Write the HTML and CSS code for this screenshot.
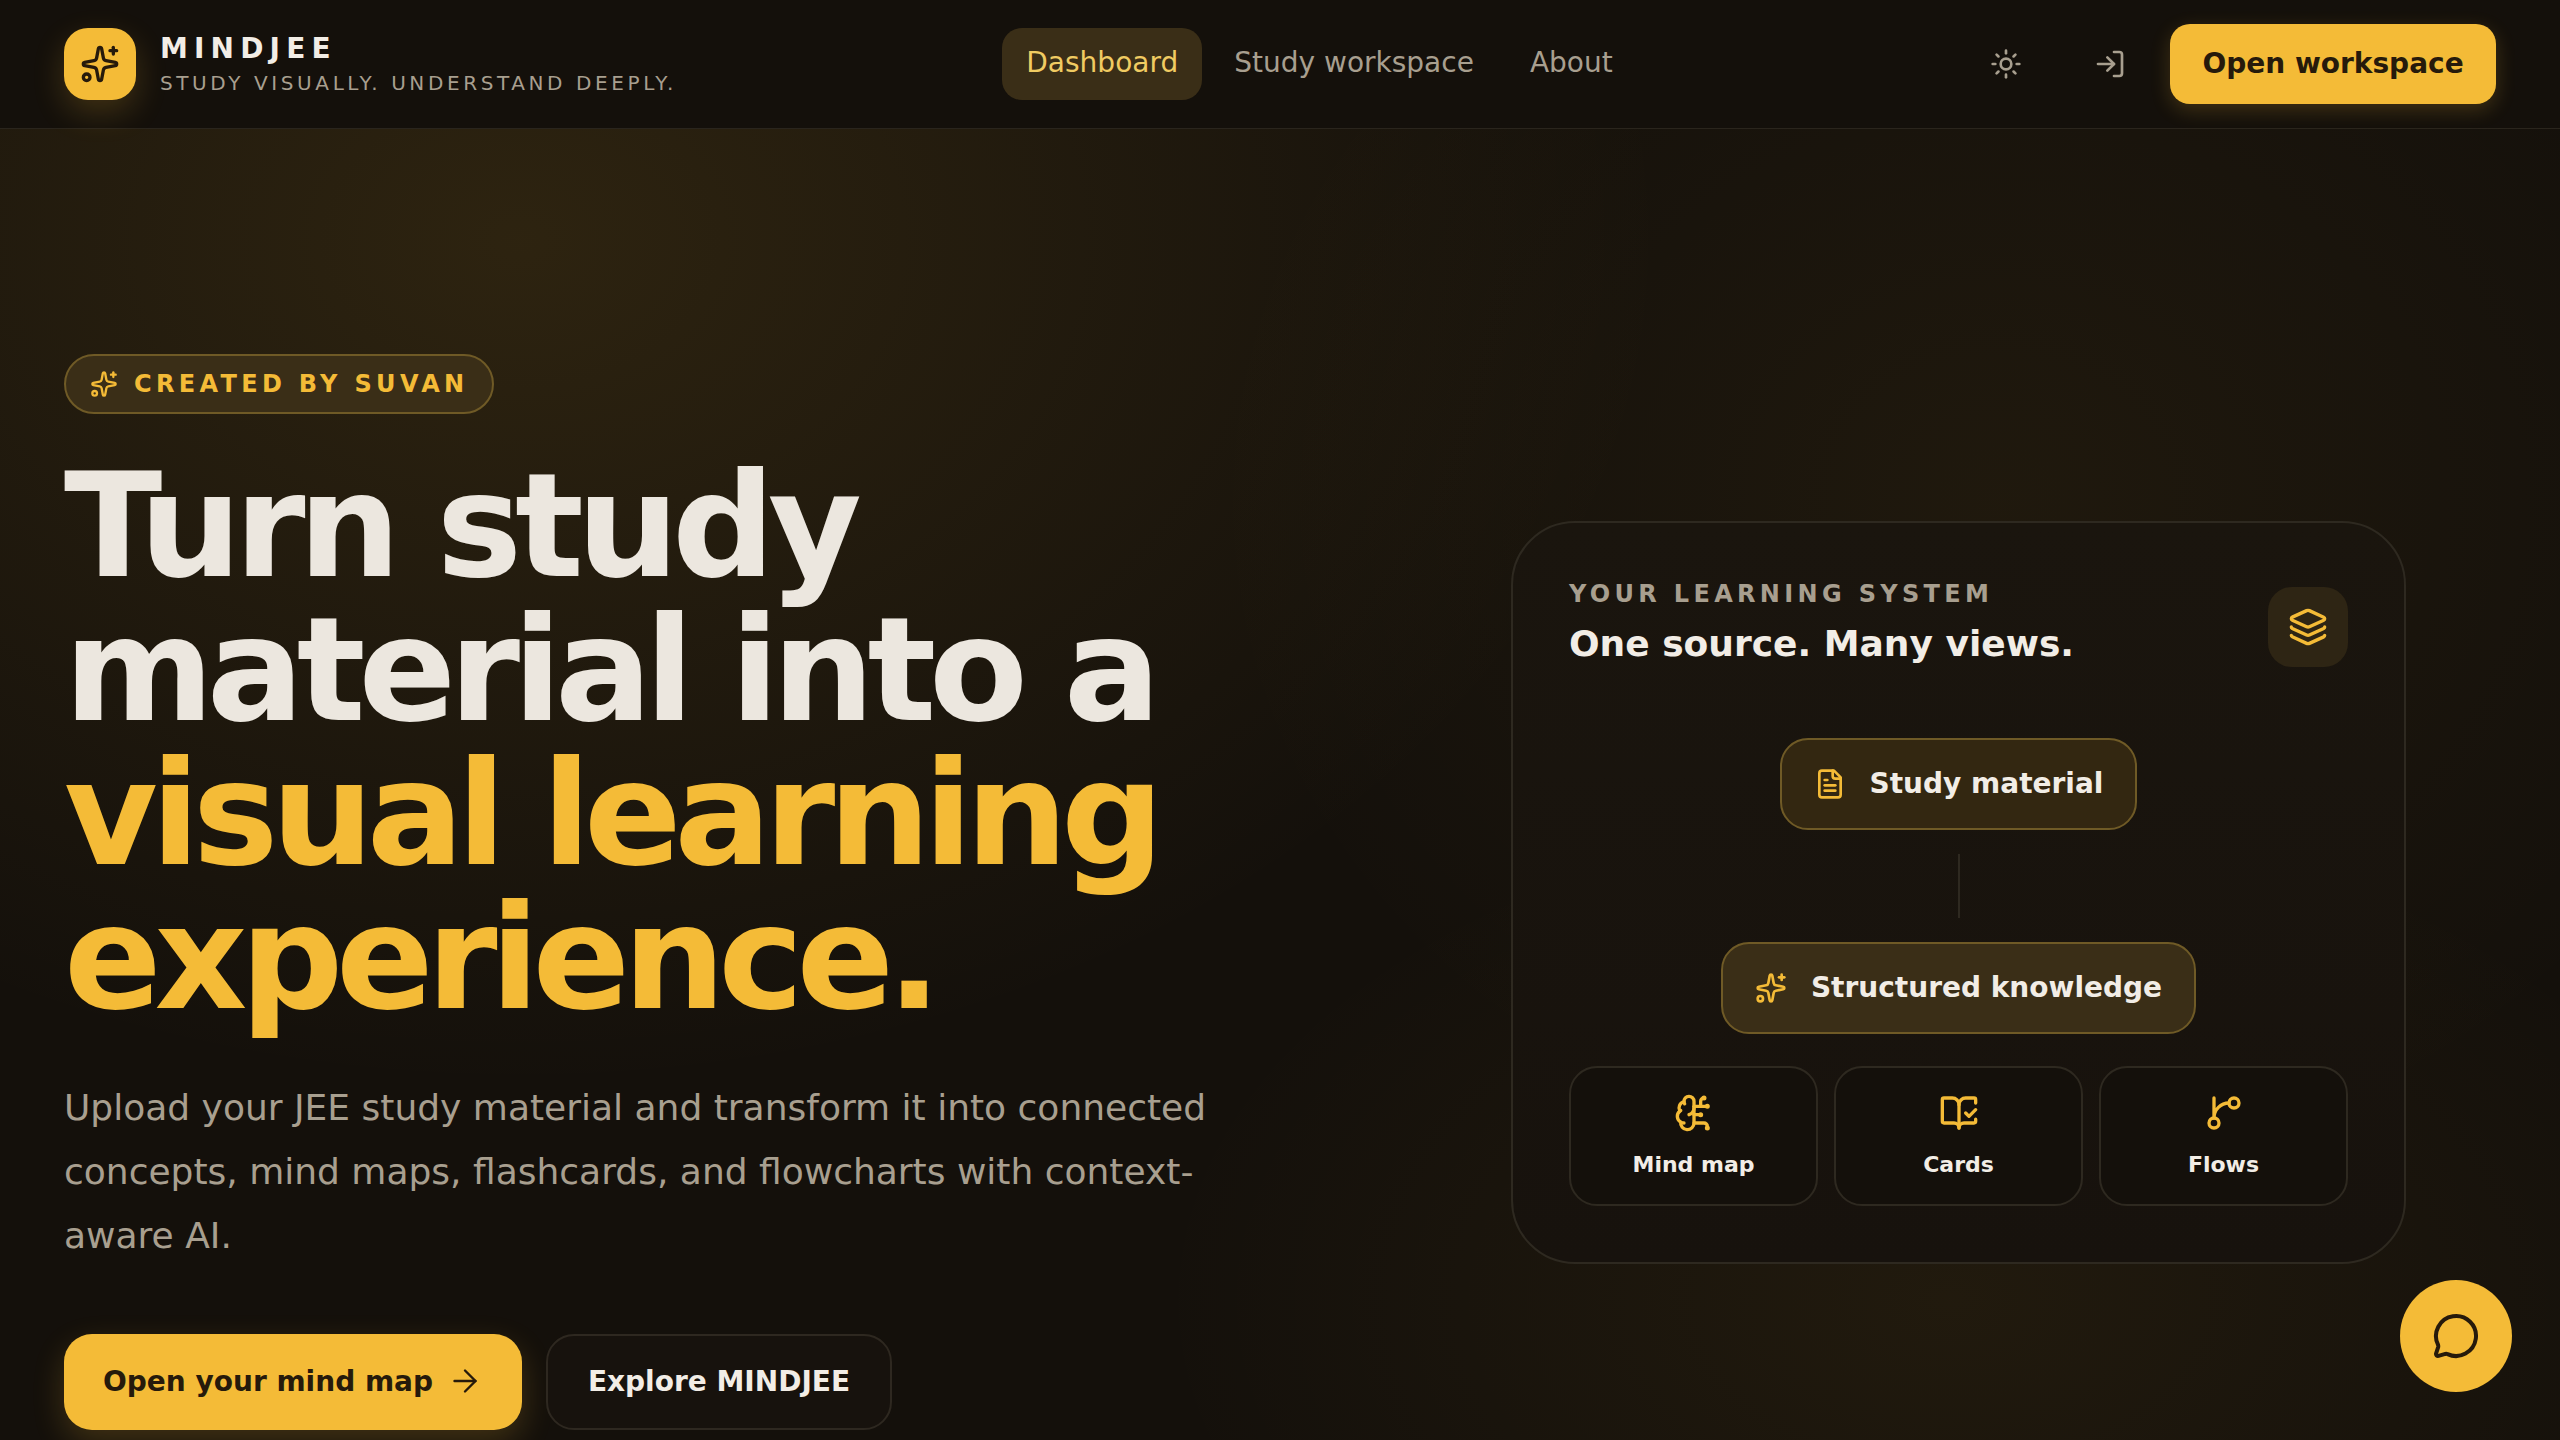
FILE: index.html
```html
<!DOCTYPE html>
<html lang="en">
<head>
	<meta charset="utf-8">
	<title>MINDJEE</title>
	<link rel="stylesheet" href="styles.css">
</head>
<body>
	<svg class="sprite" aria-hidden="true">
		<symbol id="i-sparkles" viewBox="0 0 24 24">
			<path d="M11.017 2.814a1 1 0 0 1 1.966 0l1.051 5.558a2 2 0 0 0 1.594 1.594l5.558 1.051a1 1 0 0 1 0 1.966l-5.558 1.051a2 2 0 0 0-1.594 1.594l-1.051 5.558a1 1 0 0 1-1.966 0l-1.051-5.558a2 2 0 0 0-1.594-1.594l-5.558-1.051a1 1 0 0 1 0-1.966l5.558-1.051a2 2 0 0 0 1.594-1.594z"/>
			<path d="M20 2v4"/><path d="M22 4h-4"/><circle cx="4" cy="20" r="2"/>
		</symbol>
		<symbol id="i-sun" viewBox="0 0 24 24">
			<circle cx="12" cy="12" r="4"/>
			<path d="M12 2v2"/><path d="M12 20v2"/><path d="m4.93 4.93 1.41 1.41"/><path d="m17.66 17.66 1.41 1.41"/><path d="M2 12h2"/><path d="M20 12h2"/><path d="m6.34 17.66-1.41 1.41"/><path d="m19.07 4.93-1.41 1.41"/>
		</symbol>
		<symbol id="i-login" viewBox="0 0 24 24">
			<path d="M15 3h4a2 2 0 0 1 2 2v14a2 2 0 0 1-2 2h-4"/><path d="m10 17 5-5-5-5"/><path d="M15 12H3"/>
		</symbol>
		<symbol id="i-arrow" viewBox="0 0 24 24">
			<path d="M5 12h14"/><path d="m12 5 7 7-7 7"/>
		</symbol>
		<symbol id="i-layers" viewBox="0 0 24 24">
			<path d="M12.83 2.18a2 2 0 0 0-1.66 0L2.6 6.08a1 1 0 0 0 0 1.83l8.58 3.91a2 2 0 0 0 1.66 0l8.58-3.9a1 1 0 0 0 0-1.83z"/>
			<path d="M2 12a1 1 0 0 0 .58.91l8.6 3.91a2 2 0 0 0 1.65 0l8.58-3.9A1 1 0 0 0 22 12"/>
			<path d="M2 17a1 1 0 0 0 .58.91l8.6 3.91a2 2 0 0 0 1.65 0l8.58-3.9A1 1 0 0 0 22 17"/>
		</symbol>
		<symbol id="i-file" viewBox="0 0 24 24">
			<path d="M15 2H6a2 2 0 0 0-2 2v16a2 2 0 0 0 2 2h12a2 2 0 0 0 2-2V7Z"/><path d="M14 2v4a2 2 0 0 0 2 2h4"/><path d="M10 9H8"/><path d="M16 13H8"/><path d="M16 17H8"/>
		</symbol>
		<symbol id="i-brain" viewBox="0 0 24 24">
			<path d="M12 5a3 3 0 1 0-5.997.125 4 4 0 0 0-2.526 5.77 4 4 0 0 0 .556 6.588A4 4 0 1 0 12 18Z"/>
			<path d="M9 13a4.5 4.5 0 0 0 3-4"/><path d="M6.003 5.125A3 3 0 0 0 6.401 6.5"/><path d="M3.477 10.896a4 4 0 0 1 .585-.396"/><path d="M6 18a4 4 0 0 1-1.967-.516"/>
			<path d="M12 13h4"/><path d="M12 18h6a2 2 0 0 1 2 2v1"/><path d="M12 8h8"/><path d="M16 8V5a2 2 0 0 1 2-2"/>
			<circle cx="16" cy="13" r=".5"/><circle cx="18" cy="3" r=".5"/><circle cx="20" cy="21" r=".5"/><circle cx="20" cy="8" r=".5"/>
		</symbol>
		<symbol id="i-book" viewBox="0 0 24 24">
			<path d="M12 21V7"/><path d="m16 12 2 2 4-4"/>
			<path d="M22 6V4a1 1 0 0 0-1-1h-5a4 4 0 0 0-4 4 4 4 0 0 0-4-4H3a1 1 0 0 0-1 1v13a1 1 0 0 0 1 1h6a3 3 0 0 1 3 3 3 3 0 0 1 3-3h6a1 1 0 0 0 1-1v-1.3"/>
		</symbol>
		<symbol id="i-branch" viewBox="0 0 24 24">
			<path d="M15 6a9 9 0 0 0-9 9V3"/><circle cx="18" cy="6" r="3"/><circle cx="6" cy="18" r="3"/>
		</symbol>
		<symbol id="i-chat" viewBox="0 0 24 24">
			<path d="M2.992 16.342a2 2 0 0 1 .094 1.167l-1.065 3.29a1 1 0 0 0 1.236 1.168l3.413-.998a2 2 0 0 1 1.099.092 10 10 0 1 0-4.777-4.719"/>
		</symbol>
	</svg>

	<header class="topbar">
		<div class="brand">
			<span class="brand_logo"><svg class="icon icon_40"><use href="#i-sparkles"/></svg></span>
			<div class="brand_text">
				<div class="brand_name">MINDJEE</div>
				<div class="brand_tagline">STUDY VISUALLY. UNDERSTAND DEEPLY.</div>
			</div>
		</div>
		<nav class="nav">
			<a class="nav_link nav_link_active">Dashboard</a>
			<a class="nav_link">Study workspace</a>
			<a class="nav_link">About</a>
		</nav>
		<div class="actions">
			<button class="icon_button"><svg class="icon icon_32"><use href="#i-sun"/></svg></button>
			<button class="icon_button"><svg class="icon icon_32"><use href="#i-login"/></svg></button>
			<button class="workspace_button">Open workspace</button>
		</div>
	</header>

	<main class="hero">
		<section class="hero_copy">
			<div class="badge"><svg class="icon icon_28"><use href="#i-sparkles"/></svg>CREATED BY SUVAN</div>
			<h1 class="headline">Turn study material into a <span class="headline_accent">visual learning experience.</span></h1>
			<p class="lead">Upload your JEE study material and transform it into connected concepts, mind maps, flashcards, and flowcharts with context-aware AI.</p>
			<div class="cta_row">
				<button class="cta cta_primary">Open your mind map<svg class="icon icon_36"><use href="#i-arrow"/></svg></button>
				<button class="cta cta_secondary">Explore MINDJEE</button>
			</div>
		</section>

		<section class="system_card">
			<div class="system_head">
				<div class="system_heading">
					<div class="system_label">YOUR LEARNING SYSTEM</div>
					<div class="system_title">One source. Many views.</div>
				</div>
				<span class="system_icon"><svg class="icon icon_40"><use href="#i-layers"/></svg></span>
			</div>
			<div class="flow">
				<div class="flow_chip"><svg class="icon icon_32"><use href="#i-file"/></svg>Study material</div>
				<div class="flow_line"></div>
				<div class="flow_chip flow_chip_strong"><svg class="icon icon_32"><use href="#i-sparkles"/></svg>Structured knowledge</div>
			</div>
			<div class="views">
				<div class="view"><svg class="icon icon_40"><use href="#i-brain"/></svg>Mind map</div>
				<div class="view"><svg class="icon icon_40"><use href="#i-book"/></svg>Cards</div>
				<div class="view"><svg class="icon icon_40"><use href="#i-branch"/></svg>Flows</div>
			</div>
		</section>
	</main>

	<button class="chat_button"><svg class="icon icon_48"><use href="#i-chat"/></svg></button>
</body>
</html>
```

FILE: styles.css
```css
* {
	box-sizing: border-box;
}

html, body {
	height: 100%;
}

body {
	margin: 0;
	overflow: hidden;
	font-family: "DejaVu Sans", sans-serif;
	color: #f2ede6;
	background-color: #14100b;
	background-image:
		radial-gradient(ellipse 1150px 850px at 520px 240px, rgba(244, 187, 55, 0.115), rgba(244, 187, 55, 0) 100%),
		radial-gradient(ellipse 800px 700px at 2000px 500px, rgba(244, 187, 55, 0.05), rgba(244, 187, 55, 0) 100%),
		radial-gradient(ellipse 800px 500px at 1950px 1300px, rgba(244, 187, 55, 0.06), rgba(244, 187, 55, 0) 100%);
}

.sprite {
	display: none;
}

.icon {
	flex: none;
	fill: none;
	stroke: currentColor;
	stroke-width: 2;
	stroke-linecap: round;
	stroke-linejoin: round;
}

.icon_28 { width: 28px; height: 28px; }
.icon_32 { width: 32px; height: 32px; }
.icon_36 { width: 36px; height: 36px; }
.icon_40 { width: 40px; height: 40px; }
.icon_48 { width: 48px; height: 48px; }

button {
	font-family: inherit;
	border: 0;
	padding: 0;
	background: none;
	color: inherit;
}

/* top bar */

.topbar {
	display: flex;
	justify-content: space-between;
	align-items: center;
	height: 129px;
	padding: 0 64px;
	background-color: #14100b;
	border-bottom: 1px solid #2a251d;
}

.brand {
	display: flex;
	align-items: center;
	gap: 24px;
}

.brand_logo {
	display: flex;
	align-items: center;
	justify-content: center;
	width: 72px;
	height: 72px;
	border-radius: 24px;
	color: #261a0b;
	background-color: #f4bb37;
	box-shadow: 0 12px 32px rgba(244, 187, 55, 0.2);
}

.brand_name {
	font-size: 28px;
	line-height: 36px;
	font-weight: 700;
	letter-spacing: 0.22em;
}

.brand_tagline {
	margin-top: 2px;
	font-size: 20px;
	line-height: 28px;
	letter-spacing: 0.18em;
	color: #a89f8f;
}

.nav {
	display: flex;
	align-items: center;
	gap: 8px;
}

.nav_link {
	padding: 0 24px;
	height: 72px;
	line-height: 70px;
	font-size: 28px;
	border-radius: 20px;
	color: #a89f8f;
}

.nav_link_active {
	color: #f0cb62;
	background-color: #3a2e17;
}

.actions {
	display: flex;
	align-items: center;
	gap: 16px;
}

.icon_button {
	display: flex;
	align-items: center;
	justify-content: center;
	width: 88px;
	height: 72px;
	color: #a89f8f;
}

.workspace_button {
	width: 326px;
	height: 80px;
	padding-bottom: 2px;
	border-radius: 20px;
	font-size: 28px;
	font-weight: 700;
	color: #261a0b;
	background-color: #f4bb37;
	box-shadow: 0 6px 20px rgba(244, 187, 55, 0.2);
}

/* hero */

.hero {
	display: grid;
	grid-template-columns: 1fr 1075px;
	align-items: center;
	padding: 225px 64px 0;
}

.badge {
	display: inline-flex;
	align-items: center;
	gap: 16px;
	height: 60px;
	padding: 0 24px;
	border: 2px solid #6f5a26;
	border-radius: 30px;
	font-size: 24px;
	font-weight: 700;
	letter-spacing: 0.18em;
	color: #f4bb37;
	background-color: #3a2e17;
}

.headline {
	margin: 40px 0 0;
	font-size: 144px;
	line-height: 144px;
	font-weight: 700;
	letter-spacing: -0.05em;
	color: #ece7df;
}

.headline_accent {
	color: #f4bb37;
}

.lead {
	width: 1190px;
	margin: 46px 0 0;
	font-size: 36px;
	line-height: 64px;
	color: #a89f8f;
}

.cta_row {
	display: flex;
	gap: 24px;
	margin-top: 66px;
}

.cta {
	display: flex;
	align-items: center;
	justify-content: center;
	gap: 14px;
	height: 96px;
	padding-bottom: 2px;
	border-radius: 28px;
	font-size: 28px;
	font-weight: 700;
}

.cta .icon {
	stroke-width: 1.6;
}

.cta_primary {
	width: 458px;
	color: #261a0b;
	background-color: #f4bb37;
	box-shadow: 0 12px 32px rgba(244, 187, 55, 0.2);
}

.cta_secondary {
	width: 346px;
	color: #f2ede6;
	background-color: #17120d;
	border: 2px solid #2e2820;
}

/* learning system card */

.system_card {
	justify-self: center;
	width: 895px;
	padding: 64px 56px 56px;
	border: 2px solid #2e2920;
	border-radius: 64px;
	background-image: linear-gradient(180deg, #1a150e, #17120d);
}

.system_head {
	display: flex;
	justify-content: space-between;
	align-items: center;
	height: 80px;
}

.system_heading {
	padding-bottom: 2px;
}

.system_label {
	font-size: 24px;
	line-height: 32px;
	font-weight: 700;
	letter-spacing: 0.18em;
	color: #a89f8f;
}

.system_title {
	margin-top: 4px;
	font-size: 36px;
	line-height: 60px;
	font-weight: 700;
}

.system_icon {
	display: flex;
	align-items: center;
	justify-content: center;
	width: 80px;
	height: 80px;
	border-radius: 24px;
	color: #f4bb37;
	background-color: #2e2514;
}

.flow {
	display: flex;
	flex-direction: column;
	align-items: center;
	margin-top: 71px;
}

.flow_chip {
	display: flex;
	align-items: center;
	gap: 24px;
	height: 92px;
	padding: 0 32px;
	border: 2px solid #6f5a26;
	border-radius: 28px;
	font-size: 28px;
	font-weight: 700;
	background-color: #332711;
}

.flow_chip .icon {
	color: #f4bb37;
}

.flow_chip_strong {
	background-color: #3a2e17;
}

.flow_line {
	width: 2px;
	height: 64px;
	margin: 24px 0;
	background-color: #2e2920;
}

.views {
	display: grid;
	grid-template-columns: repeat(3, 1fr);
	gap: 16px;
	margin-top: 32px;
}

.view {
	display: flex;
	flex-direction: column;
	align-items: center;
	justify-content: center;
	gap: 18px;
	height: 140px;
	border: 2px solid #2e2920;
	border-radius: 28px;
	font-size: 22px;
	line-height: 28px;
	font-weight: 700;
	background-color: #14100b;
}

.view .icon {
	color: #f4bb37;
}

/* chat */

.chat_button {
	position: fixed;
	right: 48px;
	bottom: 48px;
	display: flex;
	align-items: center;
	justify-content: center;
	width: 112px;
	height: 112px;
	border-radius: 50%;
	color: #261a0b;
	background-color: #f4bb37;
}
```
